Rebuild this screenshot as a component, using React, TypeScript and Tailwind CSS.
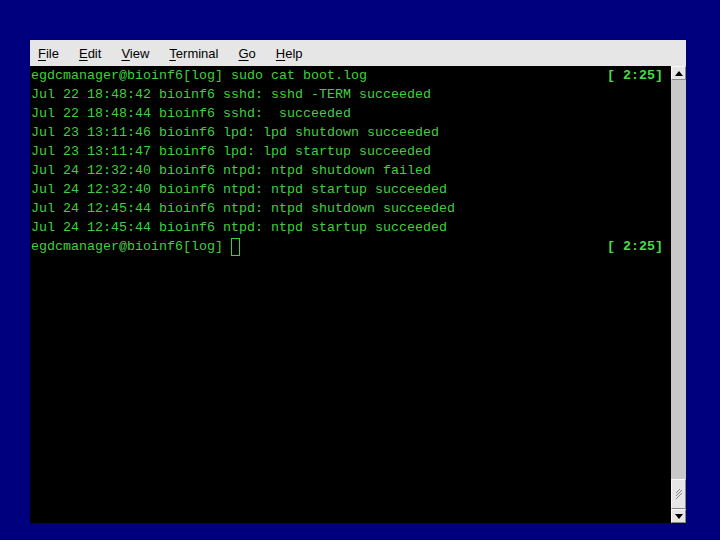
import React from "react";

const lines = [
  "Jul 22 18:48:42 bioinf6 sshd: sshd -TERM succeeded",
  "Jul 22 18:48:44 bioinf6 sshd:  succeeded",
  "Jul 23 13:11:46 bioinf6 lpd: lpd shutdown succeeded",
  "Jul 23 13:11:47 bioinf6 lpd: lpd startup succeeded",
  "Jul 24 12:32:40 bioinf6 ntpd: ntpd shutdown failed",
  "Jul 24 12:32:40 bioinf6 ntpd: ntpd startup succeeded",
  "Jul 24 12:45:44 bioinf6 ntpd: ntpd shutdown succeeded",
  "Jul 24 12:45:44 bioinf6 ntpd: ntpd startup succeeded",
];

const menus: [string, string][] = [
  ["F", "ile"],
  ["E", "dit"],
  ["V", "iew"],
  ["T", "erminal"],
  ["G", "o"],
  ["H", "elp"],
];

const mono = { fontFamily: '"Liberation Mono", "DejaVu Sans Mono", monospace' };

export default function App() {
  return (
    <div className="w-[720px] h-[540px] bg-[#00007f] pt-[40px] pl-[30px] overflow-hidden">
      <div className="w-[656px] h-[483px] flex flex-col">
        <div
          className="h-[26px] bg-[#e6e6e6] flex items-center pl-[8px] gap-[20px] text-[13px] text-black"
          style={{ fontFamily: '"Liberation Sans", Arial, sans-serif' }}
        >
          {menus.map(([u, rest]) => (
            <span key={u + rest} className="pt-[1px]">
              <span className="underline underline-offset-[2px]">{u}</span>
              {rest}
            </span>
          ))}
        </div>
        <div className="flex-1 flex bg-black">
          <div
            className="flex-1 pl-[1px] pt-[0px] text-[13.33px] leading-[19px] text-[#3fd03f] whitespace-pre"
            style={mono}
          >
            <div className="flex justify-between pr-[8px]">
              <span>egdcmanager@bioinf6[log] sudo cat boot.log</span>
              <span className="font-bold text-[#44dd44]">[ 2:25]</span>
            </div>
            {lines.map((l, i) => (
              <div key={i}>{l}</div>
            ))}
            <div className="flex justify-between pr-[8px]">
              <span className="flex items-center">
                egdcmanager@bioinf6[log]{" "}
                <span className="inline-block w-[9px] h-[18px] border border-[#3fd03f]" />
              </span>
              <span className="font-bold text-[#44dd44]">[ 2:25]</span>
            </div>
          </div>
          <div className="w-[15px] bg-[#c8c8c8] flex flex-col">
            <div className="h-[14px] bg-[#e6e6e6] border border-[#f8f8f8] border-r-[#888] border-b-[#888] flex items-center justify-center">
              <svg width="8" height="5" viewBox="0 0 8 5">
                <path d="M0 5 L4 0 L8 5 Z" fill="#000" />
              </svg>
            </div>
            <div className="flex-1" />
            <div className="h-[30px] bg-[#e6e6e6] border border-[#f8f8f8] border-r-[#888] border-b-[#888] flex items-center justify-center">
              <svg width="8" height="12" viewBox="0 0 8 12">
                <path d="M1 5 L5 1 M1 8 L7 2 M1 11 L7 5" stroke="#888" strokeWidth="1" />
              </svg>
            </div>
            <div className="h-[14px] bg-[#e6e6e6] border border-[#f8f8f8] border-r-[#888] border-b-[#888] flex items-center justify-center">
              <svg width="8" height="5" viewBox="0 0 8 5">
                <path d="M0 0 L4 5 L8 0 Z" fill="#000" />
              </svg>
            </div>
          </div>
        </div>
      </div>
    </div>
  );
}
